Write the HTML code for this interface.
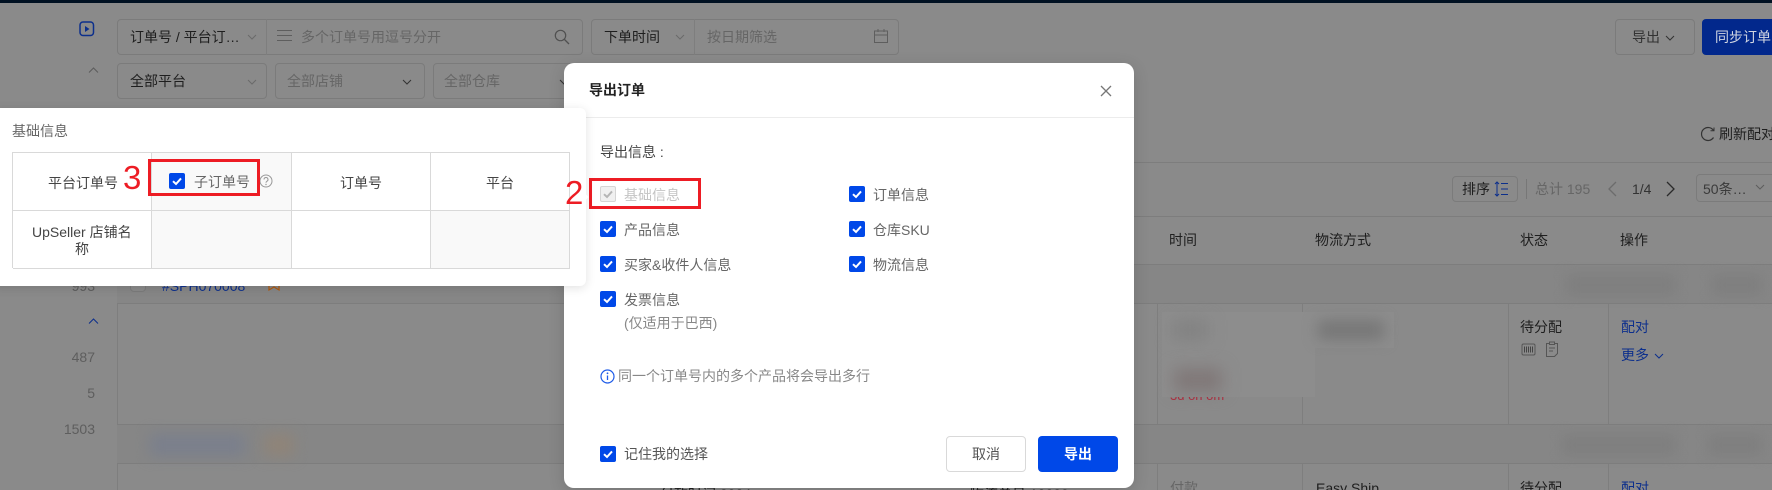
<!DOCTYPE html>
<html lang="zh"><head><meta charset="utf-8"><title>导出订单</title>
<style>
html,body{margin:0;padding:0;width:1772px;height:490px;overflow:hidden}
#root{position:absolute;left:0;top:0;width:1772px;height:490px;overflow:hidden;contain:paint;background:#8a8a8a;font-family:"Liberation Sans","Noto Sans CJK SC",sans-serif;font-size:14px;color:#222}
div,span,svg{position:absolute;box-sizing:border-box}
.t{white-space:nowrap;line-height:20px;height:20px}
.g{color:#5e5e5e}.d{color:#1e1e1e}.b{color:#0c2f8c}
.box{border:1px solid #7b7b7b;border-radius:4px}
.h{height:1px;background:#7d7d7d}
.v{width:1px;background:#7e7e7e}
.bl{filter:blur(6px);background:#7f7f7f}
.m{color:#666}
.cb{width:16px;height:16px;background:#0048e8;border-radius:2px}
.cell{border-right:1px solid #d9d9d9;border-bottom:1px solid #d9d9d9}
.red{border:3px solid #ed1c24}
.num{font-family:"Liberation Sans","DejaVu Sans",sans-serif;color:#ed1c24;font-size:33px;line-height:36px;height:36px}
</style></head><body><div id="root">
<svg width="0" height="0" style="left:0;top:0"><defs>
<symbol id="ck" viewBox="0 0 16 16"><path d="M4 8.200l3 2.800 5-5.600" fill="none" stroke="#fff" stroke-width="2"/></symbol>
<symbol id="ch" viewBox="0 0 12 12"><path d="M2 4l4 4 4-4" fill="none" stroke="currentColor" stroke-width="1"/></symbol>
</defs></svg>

<div style="left:0;top:0;width:1772px;height:3px;background:#001122"></div>

<!-- sidebar -->
<div class="v" style="left:117px;top:108px;height:382px"></div>
<svg style="left:79px;top:21px" width="16" height="16" viewBox="0 0 16 16"><rect x="1" y="1" width="13.500" height="13.500" rx="3" fill="none" stroke="#0c2f8c" stroke-width="1.500"/><path d="M6 5l4.500 3-4.500 3z" fill="#0c2f8c"/></svg>
<svg style="left:88px;top:66px" width="11" height="8" viewBox="0 0 11 8"><path d="M1 6.500l4.500-4.500 4.500 4.500" fill="none" stroke="#5c5c5c"/></svg>
<span class="t g" style="right:1677px;top:276px">993</span>
<svg style="left:88px;top:317px" width="11" height="8" viewBox="0 0 11 8"><path d="M1 6.500l4.500-4.500 4.500 4.500" fill="none" stroke="#0c2f8c"/></svg>
<span class="t g" style="right:1677px;top:347px">487</span>
<span class="t g" style="right:1677px;top:383px">5</span>
<span class="t g" style="right:1677px;top:419px">1503</span>

<!-- filters row 1 -->
<div class="box" style="left:117px;top:19px;width:466px;height:36px"></div>
<div class="v" style="left:266px;top:19px;height:36px"></div>
<span class="t d" style="left:130px;top:27px">订单号 / 平台订…</span>
<svg style="left:246px;top:31px;color:#6a6a6a" width="12" height="12"><use href="#ch"/></svg>
<svg style="left:277px;top:29px" width="15" height="13" viewBox="0 0 15 13"><path d="M0 1.500h15M0 6.500h15M0 11.500h15" stroke="#5e5e5e"/></svg>
<span class="t m" style="left:301px;top:27px">多个订单号用逗号分开</span>
<svg style="left:554px;top:29px" width="16" height="16" viewBox="0 0 16 16"><circle cx="6.500" cy="6.500" r="5.200" fill="none" stroke="#505050" stroke-width="1.200"/><path d="M10.500 10.500l4.500 4.500" stroke="#505050" stroke-width="1.300"/></svg>
<div class="box" style="left:591px;top:19px;width:308px;height:36px"></div>
<div class="v" style="left:694px;top:19px;height:36px"></div>
<span class="t d" style="left:604px;top:27px">下单时间</span>
<svg style="left:674px;top:31px;color:#6a6a6a" width="12" height="12"><use href="#ch"/></svg>
<span class="t m" style="left:707px;top:27px">按日期筛选</span>
<svg style="left:873px;top:28px" width="16" height="16" viewBox="0 0 16 16"><path d="M1.500 3h13v11.500h-13zM1.500 7h13M5 1v3M11 1v3" fill="none" stroke="#5e5e5e"/></svg>
<!-- filters row 2 -->
<div class="box" style="left:117px;top:63px;width:150px;height:36px"></div>
<span class="t d" style="left:130px;top:71px">全部平台</span>
<svg style="left:246px;top:76px;color:#6a6a6a" width="12" height="12"><use href="#ch"/></svg>
<div class="box" style="left:275px;top:63px;width:150px;height:36px"></div>
<span class="t m" style="left:287px;top:71px">全部店铺</span>
<svg style="left:401px;top:76px;color:#333" width="12" height="12"><use href="#ch"/></svg>
<div class="box" style="left:433px;top:63px;width:150px;height:36px"></div>
<span class="t m" style="left:444px;top:71px">全部仓库</span>
<svg style="left:558px;top:76px;color:#333" width="12" height="12"><use href="#ch"/></svg>

<!-- top right -->
<div class="box" style="left:1615px;top:19px;width:80px;height:36px"></div>
<span class="t g" style="left:1632px;top:27px;color:#333">导出</span>
<svg style="left:1664px;top:32px;color:#333" width="12" height="12"><use href="#ch"/></svg>
<div style="left:1702px;top:19px;width:80px;height:36px;background:#02288c;border-radius:4px"></div>
<span class="t" style="left:1715px;top:27px;color:#d2d6e2">同步订单</span>
<svg style="left:1700px;top:126px" width="16" height="16" viewBox="0 0 16 16"><path d="M13.500 4.500A6.500 6.500 0 1 0 13.500 11.500" fill="none" stroke="#333" stroke-width="1.200"/><path d="M10.500 4.800h3.500V1.500" fill="none" stroke="#333"/></svg>
<span class="t d" style="left:1719px;top:124px">刷新配对</span>
<div class="h" style="left:117px;top:162px;width:1655px"></div>

<!-- toolbar -->
<div class="box" style="left:1452px;top:176px;width:66px;height:26px"></div>
<span class="t d" style="left:1462px;top:179px">排序</span>
<svg style="left:1494px;top:181px" width="15" height="16" viewBox="0 0 15 16"><path d="M3 1v14M1 3l2-2 2 2M1 13l2 2 2-2" fill="none" stroke="#0c2f8c"/><path d="M7 2.500h7M7 8h7M7 13.500h7" stroke="#0c2f8c"/></svg>
<div class="v" style="left:1526px;top:179px;height:20px;background:#777"></div>
<span class="t m" style="left:1535px;top:179px">总计 195</span>
<svg style="left:1606px;top:180px" width="12" height="18" viewBox="0 0 12 18"><path d="M10 2L3 9l7 7" fill="none" stroke="#6c6c6c" stroke-width="1.300"/></svg>
<span class="t g" style="left:1632px;top:179px;color:#333">1/4</span>
<svg style="left:1665px;top:180px" width="12" height="18" viewBox="0 0 12 18"><path d="M2 2l7 7-7 7" fill="none" stroke="#2a2a2a" stroke-width="1.300"/></svg>
<div class="box" style="left:1696px;top:174px;width:90px;height:28px"></div>
<span class="t g" style="left:1703px;top:179px;color:#3b3b3b">50条…</span>
<svg style="left:1754px;top:181px;color:#5e5e5e" width="12" height="12"><use href="#ch"/></svg>
<div class="h" style="left:117px;top:216px;width:1655px"></div>

<!-- table -->
<span class="t d" style="left:1169px;top:230px">时间</span>
<span class="t d" style="left:1315px;top:230px">物流方式</span>
<span class="t d" style="left:1520px;top:230px">状态</span>
<span class="t d" style="left:1620px;top:230px">操作</span>
<div class="h" style="left:117px;top:264px;width:1655px"></div>
<div style="left:117px;top:265px;width:1655px;height:38px;background:#868686"></div>
<div class="box" style="left:130px;top:272px;width:16px;height:20px;background:#8a8a8a"></div>
<span class="t b" style="left:162px;top:276px">#SPH070008</span>
<svg style="left:268px;top:276px" width="12" height="16" viewBox="0 0 12 16"><path d="M1 1h10v13l-5-3-5 3z" fill="none" stroke="#b05a10" stroke-width="1.200"/></svg>
<div class="bl" style="left:1566px;top:274px;width:110px;height:22px"></div>
<div class="bl" style="left:1712px;top:274px;width:50px;height:22px"></div>
<div class="h" style="left:117px;top:303px;width:1655px"></div>
<div class="v" style="left:1157px;top:304px;height:120px"></div>
<div class="v" style="left:1302px;top:304px;height:120px"></div>
<div class="v" style="left:1508px;top:304px;height:120px"></div>
<div class="v" style="left:1608px;top:304px;height:120px"></div>
<div style="left:1162px;top:312px;width:153px;height:85px;background:#8d8d8d"></div>
<div style="left:1305px;top:312px;width:89px;height:36px;background:#8d8d8d"></div>
<div class="bl" style="left:1172px;top:320px;width:36px;height:20px;background:#828282;filter:blur(8px)"></div>
<div class="bl" style="left:1318px;top:320px;width:66px;height:20px;background:#777;filter:blur(7px)"></div>
<div class="bl" style="left:1174px;top:368px;width:48px;height:24px;background:#807878;filter:blur(8px)"></div>
<span class="t" style="left:1170px;top:386px;color:#a83040;font-size:13px;clip-path:inset(11px 0 0 0)">3d on om</span>
<span class="t d" style="left:1520px;top:317px">待分配</span>
<svg style="left:1521px;top:342px" width="15" height="15" viewBox="0 0 15 15"><rect x="1" y="2" width="13" height="11" rx="1.500" fill="none" stroke="#555"/><path d="M3.500 4.500v6M5.500 4.500v6M7.500 4.500v6M9.500 4.500v6M11.500 4.500v6" stroke="#444"/></svg>
<svg style="left:1545px;top:341px" width="14" height="17" viewBox="0 0 14 17"><path d="M1.500 2.500h11v10l-3 3h-8z" fill="none" stroke="#555"/><rect x="4.500" y="1" width="5" height="2.500" fill="#8a8a8a" stroke="#555"/><path d="M4 7h6M4 10h4" stroke="#555"/></svg>
<span class="t b" style="left:1621px;top:317px">配对</span>
<span class="t b" style="left:1621px;top:345px">更多</span>
<svg style="left:1653px;top:350px;color:#0c2f8c" width="12" height="12"><use href="#ch"/></svg>
<div class="h" style="left:117px;top:424px;width:1655px"></div>
<div style="left:117px;top:425px;width:1655px;height:38px;background:#868686"></div>
<div class="bl" style="left:150px;top:434px;width:95px;height:22px;background:#7a7f8c;filter:blur(7px)"></div>
<div class="bl" style="left:264px;top:434px;width:30px;height:22px;background:#8f8478;filter:blur(7px)"></div>
<div class="bl" style="left:1562px;top:434px;width:114px;height:22px"></div>
<div class="bl" style="left:1708px;top:434px;width:54px;height:22px"></div>
<div class="h" style="left:117px;top:463px;width:1655px"></div>
<div class="v" style="left:1157px;top:464px;height:26px"></div>
<div class="v" style="left:1302px;top:464px;height:26px"></div>
<div class="v" style="left:1508px;top:464px;height:26px"></div>
<div class="v" style="left:1608px;top:464px;height:26px"></div>
<span class="t m" style="left:1170px;top:478px">付款</span>
<span class="t d" style="left:1316px;top:478px">Easy Ship</span>
<span class="t d" style="left:1520px;top:478px">待分配</span>
<span class="t b" style="left:1621px;top:478px">配对</span>
<span class="t d" style="left:660px;top:484px">付款时间 2024</span>
<span class="t d" style="left:970px;top:484px">物流单号 10000</span>

<!-- modal -->
<div style="left:564px;top:63px;width:570px;height:425px;background:#fff;border-radius:10px;box-shadow:0 4px 16px rgba(0,0,0,.15)"></div>
<span class="t" style="left:589px;top:80px;font-weight:bold;color:#222">导出订单</span>
<svg style="left:1100px;top:85px" width="12" height="12" viewBox="0 0 12 12"><path d="M1 1l10 10M11 1L1 11" stroke="#777" stroke-width="1.300"/></svg>
<div style="left:564px;top:117px;width:570px;height:1px;background:#ececec"></div>
<span class="t" style="left:600px;top:142px;color:#444">导出信息 :</span>

<div class="cb" style="left:600px;top:186px;background:#f0f0f0;border:1px solid #d5d5d5"></div>
<svg style="left:600px;top:186px" width="16" height="16" viewBox="0 0 16 16"><path d="M4 8.200l3 2.800 5-5.600" fill="none" stroke="#b5b5b5" stroke-width="2"/></svg>
<span class="t" style="left:624px;top:185px;color:#c4c4c4">基础信息</span>
<div class="cb" style="left:849px;top:186px"><svg style="left:0;top:0" width="16" height="16"><use href="#ck"/></svg></div>
<span class="t" style="left:873px;top:185px;color:#666">订单信息</span>
<div class="cb" style="left:600px;top:221px"><svg style="left:0;top:0" width="16" height="16"><use href="#ck"/></svg></div>
<span class="t" style="left:624px;top:220px;color:#666">产品信息</span>
<div class="cb" style="left:849px;top:221px"><svg style="left:0;top:0" width="16" height="16"><use href="#ck"/></svg></div>
<span class="t" style="left:873px;top:220px;color:#666">仓库SKU</span>
<div class="cb" style="left:600px;top:256px"><svg style="left:0;top:0" width="16" height="16"><use href="#ck"/></svg></div>
<span class="t" style="left:624px;top:255px;color:#666">买家&amp;收件人信息</span>
<div class="cb" style="left:849px;top:256px"><svg style="left:0;top:0" width="16" height="16"><use href="#ck"/></svg></div>
<span class="t" style="left:873px;top:255px;color:#666">物流信息</span>
<div class="cb" style="left:600px;top:291px"><svg style="left:0;top:0" width="16" height="16"><use href="#ck"/></svg></div>
<span class="t" style="left:624px;top:290px;color:#666">发票信息</span>
<span class="t" style="left:624px;top:313px;color:#888">(仅适用于巴西)</span>
<svg style="left:600px;top:369px" width="15" height="15" viewBox="0 0 15 15"><circle cx="7.500" cy="7.500" r="6.500" fill="none" stroke="#1f5ce8" stroke-width="1.200"/><path d="M7.500 6.500v4.500" stroke="#1f5ce8" stroke-width="1.300"/><circle cx="7.500" cy="4.300" r=".9" fill="#1f5ce8"/></svg>
<span class="t" style="left:618px;top:366px;color:#888">同一个订单号内的多个产品将会导出多行</span>
<div class="cb" style="left:600px;top:446px"><svg style="left:0;top:0" width="16" height="16"><use href="#ck"/></svg></div>
<span class="t" style="left:624px;top:444px;color:#555">记住我的选择</span>
<div style="left:946px;top:436px;width:80px;height:36px;border:1px solid #d9d9d9;border-radius:4px;background:#fff"></div>
<span class="t" style="left:972px;top:444px;color:#555">取消</span>
<div style="left:1038px;top:436px;width:80px;height:36px;background:#0048e8;border-radius:4px"></div>
<span class="t" style="left:1064px;top:444px;color:#fff;font-weight:bold">导出</span>
<div class="red" style="left:589px;top:178px;width:112px;height:31px"></div>

<!-- popover -->
<div style="left:-10px;top:108px;width:596px;height:178px;background:#fff;border-radius:6px;box-shadow:0 2px 10px rgba(0,0,0,.12)"></div>
<div style="left:579px;top:193px;width:8px;height:8px;background:#fff;transform:rotate(45deg)"></div>
<span class="t" style="left:12px;top:121px;color:#666">基础信息</span>
<div style="left:12px;top:152px;width:558px;height:116px;border-top:1px solid #d9d9d9;border-left:1px solid #d9d9d9"></div>
<div class="cell" style="left:13px;top:153px;width:139px;height:58px"></div>
<div class="cell" style="left:152px;top:153px;width:140px;height:58px;background:#f9f9f9"></div>
<div class="cell" style="left:292px;top:153px;width:139px;height:58px"></div>
<div class="cell" style="left:431px;top:153px;width:139px;height:58px"></div>
<div class="cell" style="left:13px;top:211px;width:139px;height:58px"></div>
<div class="cell" style="left:152px;top:211px;width:140px;height:58px;background:#f9f9f9"></div>
<div class="cell" style="left:292px;top:211px;width:139px;height:58px"></div>
<div class="cell" style="left:431px;top:211px;width:139px;height:58px;background:#f9f9f9"></div>
<span class="t" style="left:48px;top:173px;color:#444">平台订单号</span>
<div class="cb" style="left:169px;top:173px"><svg style="left:0;top:0" width="16" height="16"><use href="#ck"/></svg></div>
<span class="t" style="left:194px;top:172px;color:#666">子订单号</span>
<svg style="left:259px;top:174px" width="14" height="14" viewBox="0 0 14 14"><circle cx="7" cy="7" r="6" fill="none" stroke="#999"/><path d="M5 5.500a2 2 0 1 1 3 1.700c-.7.400-1 .8-1 1.500" fill="none" stroke="#999"/><circle cx="7" cy="10.500" r=".7" fill="#999"/></svg>
<span class="t" style="left:340px;top:173px;color:#444">订单号</span>
<span class="t" style="left:486px;top:173px;color:#444">平台</span>
<span class="t" style="left:32px;top:222px;color:#444">UpSeller 店铺名</span>
<span class="t" style="left:75px;top:239px;color:#444">称</span>
<div class="red" style="left:148px;top:159px;width:112px;height:37px"></div>
<div class="num" style="left:123px;top:160px">3</div>
<div class="num" style="left:565px;top:175px">2</div>
</div></body></html>
